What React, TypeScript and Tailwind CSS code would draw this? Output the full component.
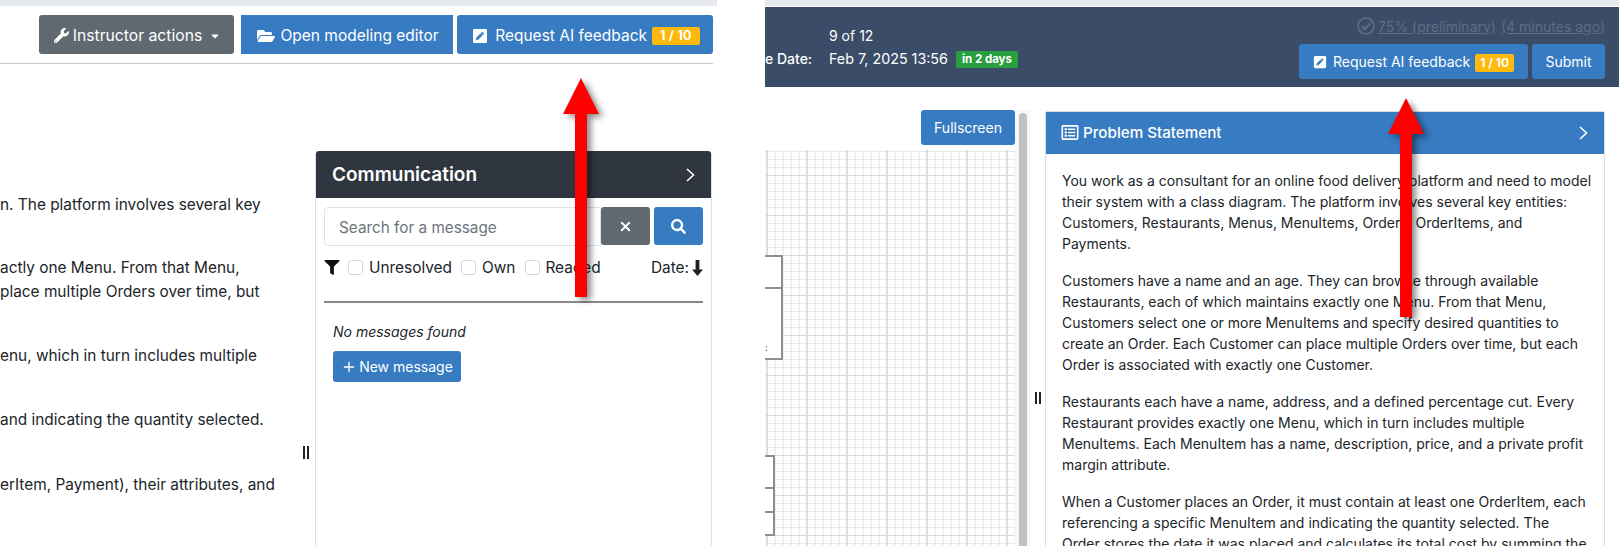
import { Plus, X } from "lucide-react"
import {
  FaCaretDown,
  FaFilter,
  FaFolderOpen,
  FaPenSquare,
  FaRegCheckCircle,
  FaRegListAlt,
  FaSearch,
  FaWrench,
} from "react-icons/fa"

function Arrow({ className }: { className: string }) {
  return (
    <svg
      viewBox="0 0 36 219"
      className={`absolute w-[36px] h-[219px] drop-shadow-[4px_3px_3px_rgba(0,0,0,0.45)] ${className}`}
    >
      <path d="M18 0 L36 36 L24 36 L24 219 L12 219 L12 36 L0 36 Z" fill="#ff0000" />
    </svg>
  )
}

function Pause({ className }: { className: string }) {
  return (
    <div className={`flex gap-[2px] ${className}`}>
      <div className="w-[2px] h-full bg-[#222]" />
      <div className="w-[2px] h-full bg-[#222]" />
    </div>
  )
}

function Chevron() {
  return (
    <svg viewBox="0 0 9 14" className="w-[9px] h-[14px]" fill="none" stroke="currentColor" strokeWidth="1.6">
      <path d="M1 1 L7.5 7 L1 13" />
    </svg>
  )
}

export default function App() {
  return (
    <div className="relative flex w-[1619px] h-[546px] overflow-hidden bg-white text-[#212529] font-['Inter','Liberation_Sans',sans-serif]">
      {/* left window */}
      <div className="w-[717px] shrink-0 flex flex-col">
        <div className="h-[6px] bg-[#e5e8ed]" />
        <div className="mr-[4px] pt-[9px] pb-[9px] border-b border-[#c9c9c9] flex justify-end h-[58px]">
          <button className="h-[39px] w-[195px] bg-[#60696f] text-white rounded-[3px] flex items-center justify-center text-[15.7px] mr-[7px] pt-[2px] pl-[2px]">
            <FaWrench className="w-[15px] h-[15px] mr-[4px]" />
            Instructor actions
            <FaCaretDown className="w-[12px] h-[12px] ml-[7px]" />
          </button>
          <button className="h-[39px] w-[212px] bg-[#377bc2] text-white flex items-center justify-center text-[15.5px] mr-[4px] pt-[2px] pl-[2px]">
            <FaFolderOpen className="w-[18px] h-[16px] mr-[5px]" />
            Open modeling editor
          </button>
          <button className="h-[39px] w-[256px] bg-[#377bc2] text-white rounded-[3px] flex items-center justify-center text-[15.5px] pt-[2px] pl-[2px]">
            <FaPenSquare className="w-[16px] h-[16px] mr-[7px]" />
            Request AI feedback
            <span className="ml-[5px] bg-[#fdb90c] rounded-[2px] font-bold text-[12.5px] leading-[18px] h-[18px] px-[8px] tracking-[0.3px]">
              1 / 10
            </span>
          </button>
        </div>

        <div className="flex flex-1 mt-[87px]">
          <div className="w-[315px] shrink-0 relative text-[15.4px] leading-[24px] whitespace-nowrap pt-[42px]">
            <p>n. The platform involves several key</p>
            <p className="mt-[39px]">actly one Menu. From that Menu,</p>
            <p>place multiple Orders over time, but</p>
            <p className="mt-[40px]">enu, which in turn includes multiple</p>
            <p className="mt-[40px]">and indicating the quantity selected.</p>
            <p className="mt-[41px]">erItem, Payment), their attributes, and</p>
            <Pause className="absolute left-[303px] top-[295px] h-[13px]" />
          </div>

          <div className="w-[397px] border-x border-[#dfe3e8] rounded-t-[4px]">
            <div className="h-[47px] bg-[#2f363f] rounded-t-[3px] text-white flex items-center justify-between pl-[16px] pr-[16px]">
              <span className="text-[19px] font-semibold pt-[2px]">Communication</span>
              <Chevron />
            </div>
            <div className="px-[8px] pt-[9px]">
              <div className="flex">
                <div className="w-[277px] h-[39px] border border-[#dfe3e8] rounded-l-[4px] flex items-center pl-[14px] pt-[3px] text-[15.3px] text-[#6c757d]">
                  Search for a message
                </div>
                <button className="w-[49px] h-[38px] bg-[#60696f] text-white rounded-[3px] flex items-center justify-center">
                  <X className="w-[15px] h-[15px]" strokeWidth={3} />
                </button>
                <button className="w-[49px] h-[38px] ml-[4px] bg-[#377bc2] text-white rounded-[3px] flex items-center justify-center">
                  <FaSearch className="w-[15px] h-[15px]" />
                </button>
              </div>

              <div className="flex items-center h-[18px] mt-[12px] pt-[1px] text-[15.4px]">
                <FaFilter className="w-[16px] h-[15px] text-[#111]" />
                <span className="w-[15px] h-[15px] border border-[#d5dae0] rounded-[3px] ml-[8px] mr-[6px]" />
                <span>Unresolved</span>
                <span className="w-[15px] h-[15px] border border-[#d5dae0] rounded-[3px] ml-[9px] mr-[6px]" />
                <span>Own</span>
                <span className="w-[15px] h-[15px] border border-[#d5dae0] rounded-[3px] ml-[10px] mr-[5px]" />
                <span>Readed</span>
                <span className="ml-auto">Date:</span>
                <svg viewBox="0 0 11 16" className="w-[11px] h-[16px] ml-[3px] text-[#222]" fill="currentColor">
                  <path d="M3.6 0 H7.4 V9.5 H11 L5.5 16 L0 9.5 H3.6 Z" />
                </svg>
              </div>

              <div className="h-[2px] bg-[#888] mt-[25px]" />

              <div className="pl-[9px]">
                <p className="italic text-[14px] leading-[20px] mt-[19px]">No messages found</p>
                <button className="w-[128px] h-[31px] mt-[9px] bg-[#377bc2] text-white rounded-[3px] flex items-center justify-center text-[14px]">
                  <Plus className="w-[16px] h-[16px] mr-[2px]" strokeWidth={2} />
                  New message
                </button>
              </div>
            </div>
          </div>
        </div>
      </div>

      {/* right window */}
      <div className="w-[854px] ml-[48px] shrink-0 flex flex-col">
        <div className="h-[6px] bg-[#e5e8ed]" />
        <div className="mt-[1px] h-[80px] bg-[#3a4c68] text-white flex justify-between text-[14px] pr-[14px]">
          <div className="flex flex-col pt-[19px] leading-[20px]">
            <div className="pl-[64px]">9 of 12</div>
            <div className="flex items-center mt-[3px]">
              <span className="w-[64px] font-medium">e Date:</span>
              <span className="text-[14.3px]">Feb 7, 2025 13:56</span>
              <span className="ml-[8px] bg-[#28a03f] rounded-[2px] h-[17px] px-[6px] text-[11.5px] leading-[17px] font-bold">
                in 2 days
              </span>
            </div>
          </div>
          <div className="flex flex-col items-end pt-[10px]">
            <div className="flex items-center h-[18px] text-[#5e6d84]">
              <FaRegCheckCircle className="w-[18px] h-[18px] mr-[3px]" />
              <span className="underline">75% (preliminary)</span>
              <span className="underline ml-[5px]">(4 minutes ago)</span>
            </div>
            <div className="flex mt-[9px]">
              <button className="w-[229px] h-[35px] bg-[#377bc2] rounded-[3px] flex items-center justify-center">
                <FaPenSquare className="w-[14px] h-[14px] mr-[6px]" />
                Request AI feedback
                <span className="ml-[5px] bg-[#fdb90c] rounded-[2px] font-bold text-[12px] leading-[18px] h-[18px] px-[5px] mt-[2px]">
                  1 / 10
                </span>
              </button>
              <button className="w-[73px] h-[35px] ml-[4px] bg-[#377bc2] rounded-[3px]">Submit</button>
            </div>
          </div>
        </div>

        <div className="flex flex-1 min-h-0">
          <div className="w-[250px] shrink-0 flex flex-col">
            <button className="self-end w-[94px] h-[35px] mt-[23px] bg-[#377bc2] text-white rounded-[3px] text-[14px]">
              Fullscreen
            </button>
            <div className="relative mt-[5px] flex-1 bg-white bg-[linear-gradient(#d5d7db_1px,transparent_1px),linear-gradient(90deg,#c9cbd0_1px,transparent_1px),linear-gradient(#e6e8ec_1px,transparent_1px),linear-gradient(90deg,#e0e2e7_1px,transparent_1px)] bg-[size:40px_40px,40px_40px,8px_8px,8px_8px] bg-[position:0_25px,1.5px_0,0_1px,1.5px_0]">
              {/* pieces of the class diagram */}
              <div className="absolute left-0 top-[105px] w-[18px] h-[105px] bg-white border-y-2 border-r-2 border-[#8b8e93]">
                <div className="mt-[30px] h-[2px] bg-[#8b8e93]" />
                <div className="absolute left-0 top-[86px] text-[9px] leading-[10px] text-[#333]">:</div>
              </div>
              <div className="absolute left-0 top-[305px] w-[10px] h-[81px] bg-white border-y-2 border-r-2 border-[#8b8e93]">
                <div className="mt-[30px] h-[2px] bg-[#8b8e93]" />
                <div className="mt-[22px] h-[2px] bg-[#8b8e93]" />
              </div>
            </div>
          </div>

          <div className="w-[15px] shrink-0 mt-[23px] bg-[#f8f8f8] flex justify-center pt-[3px]">
            <div className="w-[8px] h-full bg-[#c1c1c1] rounded-t-[4px]" />
          </div>

          <div className="relative w-[15px] shrink-0">
            <Pause className="absolute left-[5px] top-[305px] h-[12px]" />
          </div>

          <div className="w-[560px] shrink-0 mt-[24px] border-x border-t border-[#d5dde6] rounded-t-[3px] text-[14px] leading-[21px]">
            <div className="h-[42px] bg-[#377bc2] text-white flex items-center justify-between pl-[15px] pr-[16px]">
              <div className="flex items-center text-[15.2px] font-medium -mt-[2px]">
                <FaRegListAlt className="w-[18px] h-[17px] mr-[4px]" />
                Problem Statement
              </div>
              <Chevron />
            </div>
            <div className="pl-[16px] pr-[10px] pt-[16px] space-y-[16px]">
              <p>
                You work as a consultant for an online food delivery platform and need to model their system with a
                class diagram. The platform involves several key entities: Customers, Restaurants, Menus, MenuItems,
                Orders, OrderItems, and Payments.
              </p>
              <p>
                Customers have a name and an age. They can browse through available Restaurants, each of which
                maintains exactly one Menu. From that Menu, Customers select one or more MenuItems and specify desired
                quantities to create an Order. Each Customer can place multiple Orders over time, but each Order is
                associated with exactly one Customer.
              </p>
              <p>
                Restaurants each have a name, address, and a defined percentage cut. Every Restaurant provides exactly
                one Menu, which in turn includes multiple MenuItems. Each MenuItem has a name, description, price, and
                a private profit margin attribute.
              </p>
              <p>
                When a Customer places an Order, it must contain at least one OrderItem, each referencing a specific
                MenuItem and indicating the quantity selected. The
                <br />
                Order stores the date it was placed and calculates its total cost by summing the
              </p>
            </div>
          </div>
        </div>
      </div>

      {/* annotation arrows */}
      <Arrow className="left-[563px] top-[78px]" />
      <Arrow className="left-[1388px] top-[98px]" />
    </div>
  )
}
